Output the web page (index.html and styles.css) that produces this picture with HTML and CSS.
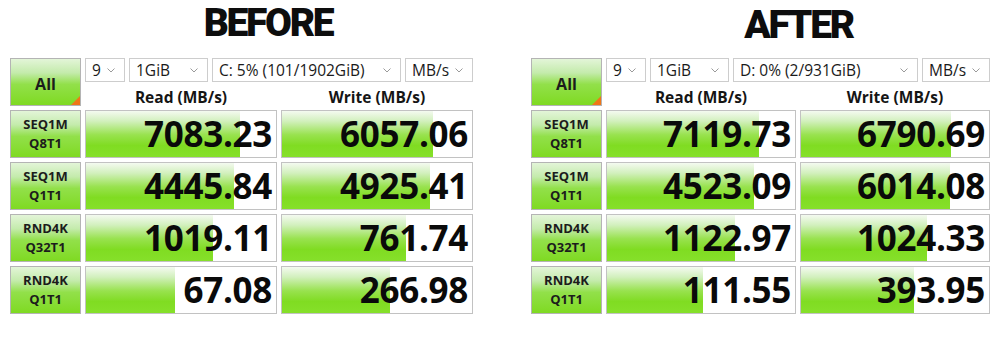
FILE: index.html
```html
<!DOCTYPE html>
<html lang="en">
<head>
    <meta charset="UTF-8">
    <meta name="viewport" content="width=device-width, initial-scale=1.0">
    <title>CrystalDiskMark - Before / After</title>
    <link rel="stylesheet" href="styles.css">
</head>
<body>

<main class="compare">

    <!-- BEFORE -->
    <section class="panel panel-before">
        <h1 class="title">BEFORE</h1>
        <div class="board">
            <div class="all">All</div>
            <div class="controls">
                <div class="select select-count">9<svg class="chev" viewBox="0 0 8 5"><polyline points="0.5,0.5 4,4 7.5,0.5"/></svg></div>
                <div class="select select-size">1GiB<svg class="chev" viewBox="0 0 8 5"><polyline points="0.5,0.5 4,4 7.5,0.5"/></svg></div>
                <div class="select select-drive">C: 5% (101/1902GiB)<svg class="chev" viewBox="0 0 8 5"><polyline points="0.5,0.5 4,4 7.5,0.5"/></svg></div>
                <div class="select select-unit">MB/s<svg class="chev" viewBox="0 0 8 5"><polyline points="0.5,0.5 4,4 7.5,0.5"/></svg></div>
            </div>
            <div class="head">Read (MB/s)</div>
            <div class="head">Write (MB/s)</div>

            <div class="test">SEQ1M<br>Q8T1</div>
            <div class="result"><span class="bar" style="width: 81%"></span><span class="value">7083.23</span></div>
            <div class="result"><span class="bar" style="width: 79.5%"></span><span class="value">6057.06</span></div>

            <div class="test">SEQ1M<br>Q1T1</div>
            <div class="result"><span class="bar" style="width: 78%"></span><span class="value">4445.84</span></div>
            <div class="result"><span class="bar" style="width: 78%"></span><span class="value">4925.41</span></div>

            <div class="test">RND4K<br>Q32T1</div>
            <div class="result"><span class="bar" style="width: 67%"></span><span class="value">1019.11</span></div>
            <div class="result"><span class="bar" style="width: 65%"></span><span class="value">761.74</span></div>

            <div class="test">RND4K<br>Q1T1</div>
            <div class="result"><span class="bar" style="width: 47%"></span><span class="value">67.08</span></div>
            <div class="result"><span class="bar" style="width: 57%"></span><span class="value">266.98</span></div>
        </div>
    </section>

    <!-- AFTER -->
    <section class="panel panel-after">
        <h1 class="title">AFTER</h1>
        <div class="board">
            <div class="all">All</div>
            <div class="controls">
                <div class="select select-count">9<svg class="chev" viewBox="0 0 8 5"><polyline points="0.5,0.5 4,4 7.5,0.5"/></svg></div>
                <div class="select select-size">1GiB<svg class="chev" viewBox="0 0 8 5"><polyline points="0.5,0.5 4,4 7.5,0.5"/></svg></div>
                <div class="select select-drive">D: 0% (2/931GiB)<svg class="chev" viewBox="0 0 8 5"><polyline points="0.5,0.5 4,4 7.5,0.5"/></svg></div>
                <div class="select select-unit">MB/s<svg class="chev" viewBox="0 0 8 5"><polyline points="0.5,0.5 4,4 7.5,0.5"/></svg></div>
            </div>
            <div class="head">Read (MB/s)</div>
            <div class="head">Write (MB/s)</div>

            <div class="test">SEQ1M<br>Q8T1</div>
            <div class="result"><span class="bar" style="width: 81%"></span><span class="value">7119.73</span></div>
            <div class="result"><span class="bar" style="width: 80%"></span><span class="value">6790.69</span></div>

            <div class="test">SEQ1M<br>Q1T1</div>
            <div class="result"><span class="bar" style="width: 78%"></span><span class="value">4523.09</span></div>
            <div class="result"><span class="bar" style="width: 79.5%"></span><span class="value">6014.08</span></div>

            <div class="test">RND4K<br>Q32T1</div>
            <div class="result"><span class="bar" style="width: 68%"></span><span class="value">1122.97</span></div>
            <div class="result"><span class="bar" style="width: 67%"></span><span class="value">1024.33</span></div>

            <div class="test">RND4K<br>Q1T1</div>
            <div class="result"><span class="bar" style="width: 51%"></span><span class="value">111.55</span></div>
            <div class="result"><span class="bar" style="width: 60%"></span><span class="value">393.95</span></div>
        </div>
    </section>

</main>

</body>
</html>
```

FILE: styles.css
```css
body {
    margin: 0;
    padding: 0;
    background: #ffffff;
    font-family: "Open Sans", "Noto Sans", Arial, sans-serif;
    color: #111111;
}

.compare {
    display: flex;
    gap: 58px;
    padding-left: 10px;
}

.panel {
    width: 463px;
}

.panel-after {
    width: 460px;
    padding-top: 2px;
}

.title {
    margin: 0;
    height: 58px;
    padding-left: 75px;
    box-sizing: border-box;
    text-align: center;
    font-family: Roboto, "Open Sans", sans-serif;
    font-size: 39px;
    font-weight: 900;
    line-height: normal;
    color: #0d0d0d;
    letter-spacing: -2.3px;
}

.panel-before .title {
    padding-left: 53px;
}

.panel-after .title {
    height: 56px;
}

.board {
    display: grid;
    grid-template-columns: 71px 192px 192px;
    grid-template-rows: 24px 20px repeat(4, 48px);
    column-gap: 4px;
    row-gap: 4px;
}

.panel-after .board {
    grid-template-columns: 71px 190px 190px;
}

/* green button & label cells */
.all,
.test {
    border: 1px solid #b4b4b4;
    box-sizing: border-box;
    background: linear-gradient(to bottom, #e3f5d8 0%, #c4ebac 30%, #92e04a 55%, #7fda22 100%);
    display: flex;
    align-items: center;
    justify-content: center;
    text-align: center;
    font-weight: 700;
    color: #1c1c1c;
}

.all {
    grid-row: 1 / 3;
    position: relative;
    font-size: 16px;
    padding-top: 4px;
}

.all::after {
    content: "";
    position: absolute;
    right: 0;
    bottom: 0;
    border-style: solid;
    border-width: 0 0 9px 9px;
    border-color: transparent transparent #f07618 transparent;
}

.test {
    font-size: 13px;
    line-height: 19px;
}

/* dropdowns */
.controls {
    grid-column: 2 / 4;
    display: flex;
    gap: 4px;
}

.select {
    position: relative;
    border: 1px solid #cdcdcd;
    box-sizing: border-box;
    background: #fff;
    font-size: 15.5px;
    line-height: 22px;
    padding-left: 6px;
    color: #1a1a1a;
}

.select-count { width: 40px; }
.select-size  { width: 79px; }
.select-drive { flex: 1; }
.select-unit  { width: 68px; }

.chev {
    position: absolute;
    right: 9px;
    top: 9px;
    width: 8px;
    height: 5px;
    fill: none;
    stroke: #9a9a9a;
    stroke-width: 1;
}

.head {
    text-align: center;
    font-weight: 700;
    font-size: 15.5px;
    line-height: 22px;
    color: #151515;
}

/* result cells */
.result {
    position: relative;
    border: 1px solid #c2c2c2;
    box-sizing: border-box;
    background: #fff;
    overflow: hidden;
}

.bar {
    position: absolute;
    left: 0;
    top: 0;
    bottom: 0;
    background: linear-gradient(to bottom, #f4faf0 0%, #d2f0bd 22%, #98e24e 52%, #80dc22 75%, #86e02a 100%);
}

.value {
    position: relative;
    display: block;
    text-align: right;
    padding-right: 4px;
    font-size: 35px;
    font-weight: 700;
    line-height: 46px;
    color: #0a0a0a;
    letter-spacing: -0.3px;
}
```
